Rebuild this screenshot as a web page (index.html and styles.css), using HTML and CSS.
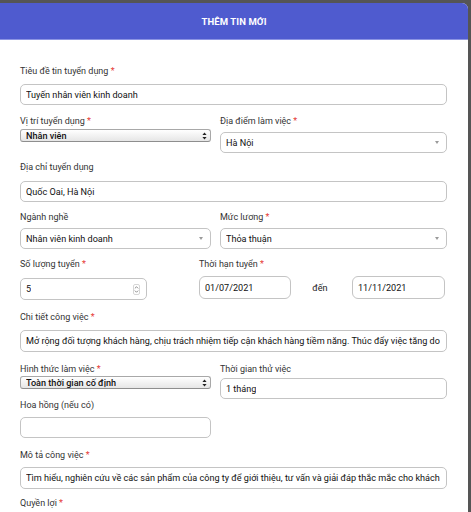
FILE: index.html
```html
<!DOCTYPE html>
<html lang="vi">
<head>
<meta charset="utf-8">
<title>Thêm tin mới</title>
<link rel="stylesheet" href="styles.css">
</head>
<body>
<div class="card">
  <div class="header">THÊM TIN MỚI</div>
  <div class="form">
    <div class="row r1">
      <div class="col full">
        <div class="lbl">Tiêu đề tin tuyển dụng <span class="req">*</span></div>
        <div class="field f-title"><span class="val">Tuyến nhân viên kinh doanh</span></div>
      </div>
    </div>

    <div class="row r2">
      <div class="col left">
        <div class="lbl">Vị trí tuyển dụng <span class="req">*</span></div>
        <div class="native n-pos"><span class="val">Nhân viên</span>
          <svg class="updown" width="5" height="8" viewBox="0 0 5 8"><path d="M2.5 0.5 L4.6 3 H0.4 Z M2.5 7.5 L4.6 5 H0.4 Z" fill="#222"/></svg>
        </div>
      </div>
      <div class="col right">
        <div class="lbl">Địa điểm làm việc <span class="req">*</span></div>
        <div class="field f-sel"><span class="val">Hà Nội</span><span class="caret"></span></div>
      </div>
    </div>

    <div class="row r3">
      <div class="col full">
        <div class="lbl">Địa chỉ tuyển dụng</div>
        <div class="field f-addr"><span class="val">Quốc Oai, Hà Nội</span></div>
      </div>
    </div>

    <div class="row r4">
      <div class="col left">
        <div class="lbl">Ngành nghề</div>
        <div class="field f-sel"><span class="val">Nhân viên kinh doanh</span><span class="caret"></span></div>
      </div>
      <div class="col right">
        <div class="lbl">Mức lương <span class="req">*</span></div>
        <div class="field f-sel"><span class="val">Thỏa thuận</span><span class="caret"></span></div>
      </div>
    </div>

    <div class="row r5">
      <div class="col qty">
        <div class="lbl">Số lượng tuyển <span class="req">*</span></div>
        <div class="field f-num"><span class="val">5</span>
          <span class="spin">
            <svg width="6" height="9" viewBox="0 0 6 9"><path d="M1 3.2 L3 1.2 L5 3.2 M1 5.8 L3 7.8 L5 5.8" fill="none" stroke="#666" stroke-width="0.9"/></svg>
          </span>
        </div>
      </div>
      <div class="col dates">
        <div class="lbl">Thời hạn tuyển <span class="req">*</span></div>
        <div class="date-row">
          <div class="field f-date"><span class="val">01/07/2021</span></div>
          <span class="den">đến</span>
          <div class="field f-date"><span class="val">11/11/2021</span></div>
        </div>
      </div>
    </div>

    <div class="row r6">
      <div class="col full">
        <div class="lbl">Chi tiết công việc <span class="req">*</span></div>
        <div class="field f-long"><span class="val">Mở rộng đối tượng khách hàng, chịu trách nhiệm tiếp cận khách hàng tiềm năng. Thúc đẩy việc tăng do</span></div>
      </div>
    </div>

    <div class="row r7">
      <div class="col left">
        <div class="lbl">Hình thức làm việc <span class="req">*</span></div>
        <div class="native n-type"><span class="val">Toàn thời gian cố định</span>
          <svg class="updown" width="5" height="8" viewBox="0 0 5 8"><path d="M2.5 0.5 L4.6 3 H0.4 Z M2.5 7.5 L4.6 5 H0.4 Z" fill="#222"/></svg>
        </div>
        <div class="lbl lbl-hh">Hoa hồng (nếu có)</div>
        <div class="field f-hh"></div>
      </div>
      <div class="col right">
        <div class="lbl">Thời gian thử việc</div>
        <div class="field f-trial"><span class="val">1 tháng</span></div>
      </div>
    </div>

    <div class="row r8">
      <div class="col full">
        <div class="lbl">Mô tả công việc <span class="req">*</span></div>
        <div class="field f-long2"><span class="val">Tìm hiểu, nghiên cứu về các sản phẩm của công ty để giới thiệu, tư vấn và giải đáp thắc mắc cho khách</span></div>
      </div>
    </div>

    <div class="row r9">
      <div class="col full">
        <div class="lbl">Quyền lợi <span class="req">*</span></div>
      </div>
    </div>
  </div>
</div>
</body>
</html>
```

FILE: styles.css
```css
* { box-sizing: border-box; }
html, body { margin: 0; padding: 0; }
body {
  background: #555;
  font-family: Roboto, "Liberation Sans", Arial, sans-serif;
  height: 512px;
  overflow: hidden;
}
.card {
  margin-top: 3px;
  width: 468px;
  background: #fff;
  border-top-right-radius: 6px;
  min-height: 509px;
}
.header {
  height: 37px;
  background: #4f5bcf;
  border-bottom: 1px solid #8c94e3;
  border-top-right-radius: 6px;
  color: #fff;
  font-size: 9.5px;
  font-weight: 700;
  display: flex;
  align-items: center;
  justify-content: center;
  letter-spacing: 0.1px;
}
.form {
  padding: 25px 21px 0 20px;
}
.row {
  display: flex;
  align-items: flex-start;
}
.r2 { margin-top: 10px; }
.r3 { margin-top: 8px; }
.r4 { margin-top: 9px; }
.r5 { margin-top: 9px; }
.r6 { margin-top: 11px; }
.r7 { margin-top: 11px; }
.r8 { margin-top: 11px; }
.r9 { margin-top: 8px; }

.col { display: flex; flex-direction: column; }
.full { width: 427px; }
.left { width: 191px; }
.right { width: 227px; margin-left: 9px; }
.qty { width: 127px; }
.dates { margin-left: 52px; width: 246px; }

.lbl {
  font-size: 9px;
  line-height: 12px;
  height: 12px;
  color: #333;
  white-space: nowrap;
}
.req { color: #e53935; }

.field {
  height: 21px;
  border: 1px solid #c4c4c4;
  border-radius: 5px;
  background: #fff;
  display: flex;
  align-items: center;
  padding: 0 4px 0 5px;
  overflow: hidden;
  white-space: nowrap;
  font-size: 9.1px;
  color: #111;
}
.val { overflow: hidden; }
.f-title { margin-top: 7px; }
.f-addr { margin-top: 8px; }
.f-sel { margin-top: 5px; justify-content: space-between; }
.caret {
  width: 0; height: 0;
  border-left: 2.5px solid transparent;
  border-right: 2.5px solid transparent;
  border-top: 3px solid #9a9a9a;
  margin-right: 3px;
  flex: none;
}
.f-num { margin-top: 8px; height: 22px; justify-content: space-between; }
.spin {
  width: 7px; height: 11px;
  border: 1px solid #d6d6d6;
  border-radius: 2px;
  display: flex; align-items: center; justify-content: center;
  margin-right: 2px;
}
.spin svg { display: block; }
.date-row { display: flex; align-items: center; margin-top: 6px; }
.f-date { width: 92px; height: 23px; border-radius: 6px; }
.f-date + .den + .f-date { width: 93px; }
.den {
  width: 61px;
  text-align: center;
  font-size: 9.1px;
  color: #222;
  padding-right: 3px;
}
.f-long { margin-top: 7px; height: 22px; }
.f-long2 { margin-top: 6px; height: 22px; }
.f-trial { margin-top: 3px; }
.f-hh { margin-top: 6px; }
.lbl-hh { margin-top: 10px; }

.native {
  height: 13px;
  border: 1px solid #a8a8a8;
  border-bottom-color: #8e8e8e;
  border-radius: 3px;
  background: linear-gradient(#ffffff, #e6e6e6);
  display: flex;
  align-items: center;
  justify-content: space-between;
  padding: 0 3px 0 5px;
  font-size: 9.1px;
  font-weight: 500;
  color: #111;
  white-space: nowrap;
}
.n-pos { margin-top: 2px; }
.n-type { margin-top: 1px; }
.updown { display: block; }
```
